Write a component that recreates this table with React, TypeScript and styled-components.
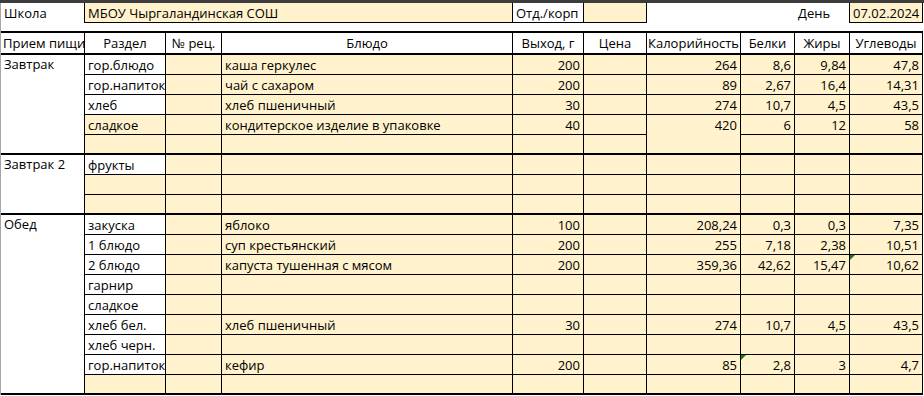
import styled, { createGlobalStyle, css } from 'styled-components';

const GlobalStyle = createGlobalStyle`
    body {
        margin: 0;
        background: #ffffff;
        font-family: "Open Sans", "Liberation Sans", sans-serif;
        font-size: 13px;
        color: #000000;
    }
`;

const COLS = '84px 81px 56px 291px 71px 63px 94px 54px 55px 73px';
const CREAM = '#fff2cc';

const Sheet = styled.div`
    width: 922px;
    border-left: 1px solid #a6a6a6;
    background: #ffffff;
`;

const TopBar = styled.div`
    height: 3px;
    width: 924px;
    background: #3c3c3c;
`;

const InfoRow = styled.div`
    display: grid;
    grid-template-columns: ${COLS};
    height: 20px;
`;

const InfoCell = styled.div<{ $cream?: boolean; $right?: boolean; $under?: boolean; $span?: number }>`
    box-sizing: border-box;
    display: flex;
    align-items: center;
    padding: 0 3px;
    white-space: nowrap;
    overflow: hidden;
    background: ${p => (p.$cream ? CREAM : '#ffffff')};
    ${p => p.$span && css`grid-column: span ${p.$span};`}
    ${p => p.$right && css`border-right: 1px solid #000;`}
    ${p => p.$under && css`border-bottom: 1px solid #000;`}
`;

const Spacer = styled.div`
    height: 8px;
`;

const HeadRow = styled.div`
    display: grid;
    grid-template-columns: ${COLS};
    height: 24px;
    box-sizing: border-box;
    border-top: 2px solid #000;
    border-bottom: 2px solid #000;
`;

const HeadCell = styled.div<{ $left?: boolean }>`
    box-sizing: border-box;
    display: flex;
    align-items: center;
    justify-content: ${p => (p.$left ? 'flex-start' : 'center')};
    padding: ${p => (p.$left ? '0 0 0 2px' : '0 2px')};
    white-space: nowrap;
    overflow: hidden;
    border-right: 1px solid #000;
`;

const Group = styled.div`
    display: grid;
    grid-template-columns: ${COLS};
    grid-auto-rows: 20px;
`;

const MealCell = styled.div<{ $rows: number }>`
    grid-row: span ${p => p.$rows};
    box-sizing: border-box;
    padding: 1px 3px;
    line-height: 17px;
    white-space: nowrap;
    border-right: 1px solid #000;
    border-bottom: 2px solid #000;
`;

const DataCell = styled.div<{ $cream?: boolean; $num?: boolean; $last?: boolean; $open?: boolean; $note?: boolean }>`
    position: relative;
    box-sizing: border-box;
    display: flex;
    align-items: center;
    justify-content: ${p => (p.$num ? 'flex-end' : 'flex-start')};
    padding: 0 3px;
    white-space: nowrap;
    overflow: hidden;
    background: ${p => (p.$cream ? CREAM : '#ffffff')};
    border-right: 1px solid #000;
    border-bottom: ${p => (p.$last ? '2px solid #000' : p.$open ? 'none' : '1px solid #000')};
    ${p =>
        p.$note &&
        css`
            &::before {
                content: '';
                position: absolute;
                left: 0;
                top: 0;
                border-top: 5px solid #1d7b1d;
                border-right: 5px solid transparent;
            }
        `}
`;

interface Dish {
    section: string;
    white?: boolean;
    name?: string;
    out?: string;
    kcal?: string;
    prot?: string;
    fat?: string;
    carb?: string;
    noteOn?: 'prot' | 'carb';
    openKcal?: boolean;
}

interface Meal {
    title: string;
    rows: Dish[];
}

const meals: Meal[] = [
    {
        title: 'Завтрак',
        rows: [
            { section: 'гор.блюдо', white: true, name: 'каша геркулес', out: '200', kcal: '264', prot: '8,6', fat: '9,84', carb: '47,8' },
            { section: 'гор.напиток', white: true, name: 'чай с сахаром', out: '200', kcal: '89', prot: '2,67', fat: '16,4', carb: '14,31' },
            { section: 'хлеб', white: true, name: 'хлеб пшеничный', out: '30', kcal: '274', prot: '10,7', fat: '4,5', carb: '43,5' },
            { section: 'сладкое', name: 'кондитерское изделие в упаковке', out: '40', kcal: '420', prot: '6', fat: '12', carb: '58', openKcal: true },
            { section: '' },
        ],
    },
    {
        title: 'Завтрак 2',
        rows: [{ section: 'фрукты', white: true }, { section: '' }, { section: '' }],
    },
    {
        title: 'Обед',
        rows: [
            { section: 'закуска', white: true, name: 'яблоко', out: '100', kcal: '208,24', prot: '0,3', fat: '0,3', carb: '7,35' },
            { section: '1 блюдо', white: true, name: 'суп крестьянский', out: '200', kcal: '255', prot: '7,18', fat: '2,38', carb: '10,51' },
            { section: '2 блюдо', white: true, name: 'капуста тушенная с мясом', out: '200', kcal: '359,36', prot: '42,62', fat: '15,47', carb: '10,62', noteOn: 'carb' },
            { section: 'гарнир', white: true },
            { section: 'сладкое', white: true },
            { section: 'хлеб бел.', white: true, name: 'хлеб пшеничный', out: '30', kcal: '274', prot: '10,7', fat: '4,5', carb: '43,5' },
            { section: 'хлеб черн.', white: true },
            { section: 'гор.напиток', white: true, name: 'кефир', out: '200', kcal: '85', prot: '2,8', fat: '3', carb: '4,7', noteOn: 'prot' },
            { section: '' },
        ],
    },
];

const headers = ['Раздел', '№ рец.', 'Блюдо', 'Выход, г', 'Цена', 'Калорийность', 'Белки', 'Жиры', 'Углеводы'];

function App() {
    return (
        <>
            <GlobalStyle />
            <TopBar />
            <Sheet>
                <InfoRow>
                    <InfoCell $right>Школа</InfoCell>
                    <InfoCell $cream $right $under $span={3}>МБОУ Чыргаландинская СОШ</InfoCell>
                    <InfoCell $right $under>Отд./корп</InfoCell>
                    <InfoCell $cream $right $under />
                    <InfoCell />
                    <InfoCell />
                    <InfoCell $right>День</InfoCell>
                    <InfoCell $cream $right $under>07.02.2024</InfoCell>
                </InfoRow>
                <Spacer />
                <HeadRow>
                    <HeadCell $left>Прием пищи</HeadCell>
                    {headers.map(h => (
                        <HeadCell key={h}>{h}</HeadCell>
                    ))}
                </HeadRow>
                {meals.map(meal => (
                    <Group key={meal.title}>
                        <MealCell $rows={meal.rows.length}>{meal.title}</MealCell>
                        {meal.rows.map((r, i) => {
                            const last = i === meal.rows.length - 1;
                            return [
                                <DataCell key={`s${i}`} $cream={!r.white} $last={last}>{r.section}</DataCell>,
                                <DataCell key={`r${i}`} $cream $last={last} />,
                                <DataCell key={`n${i}`} $cream $last={last}>{r.name}</DataCell>,
                                <DataCell key={`o${i}`} $cream $num $last={last}>{r.out}</DataCell>,
                                <DataCell key={`p${i}`} $cream $last={last} />,
                                <DataCell key={`k${i}`} $cream $num $last={last} $open={r.openKcal}>{r.kcal}</DataCell>,
                                <DataCell key={`b${i}`} $cream $num $last={last} $note={r.noteOn === 'prot'}>{r.prot}</DataCell>,
                                <DataCell key={`f${i}`} $cream $num $last={last}>{r.fat}</DataCell>,
                                <DataCell key={`c${i}`} $cream $num $last={last} $note={r.noteOn === 'carb'}>{r.carb}</DataCell>,
                            ];
                        })}
                    </Group>
                ))}
            </Sheet>
        </>
    );
}

export default App;
